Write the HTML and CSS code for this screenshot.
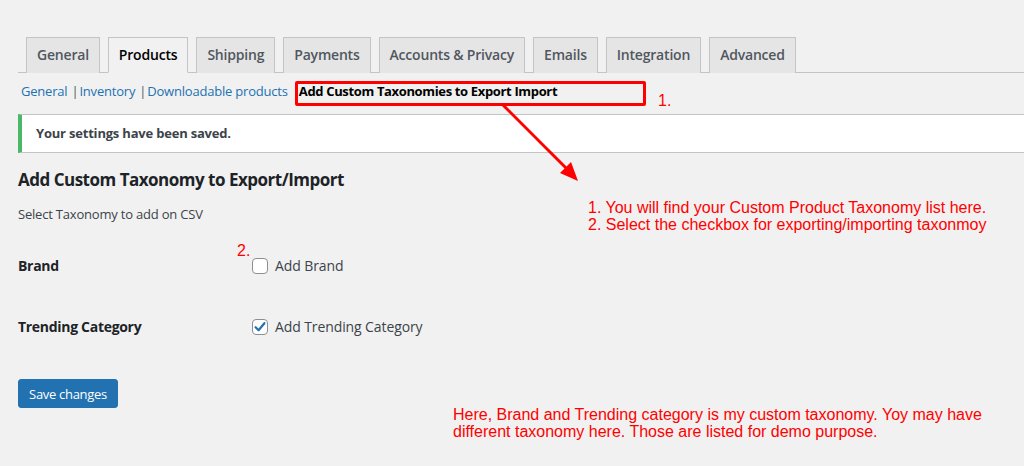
FILE: index.html
```html
<!DOCTYPE html>
<html>
<head>
<meta charset="utf-8">
<link rel="stylesheet" href="styles.css">
</head>
<body>
<div class="wrap">
  <nav class="tabs">
    <a class="tab">General</a>
    <a class="tab active">Products</a>
    <a class="tab">Shipping</a>
    <a class="tab">Payments</a>
    <a class="tab">Accounts &amp; Privacy</a>
    <a class="tab">Emails</a>
    <a class="tab">Integration</a>
    <a class="tab">Advanced</a>
  </nav>
  <ul class="subnav">
    <li><a>General</a></li>
    <li class="sep">|</li>
    <li><a>Inventory</a></li>
    <li class="sep">|</li>
    <li><a>Downloadable products</a></li>
    <li class="current">Add Custom Taxonomies to Export Import</li>
  </ul>
  <div class="notice"><p>Your settings have been saved.</p></div>
  <h2 class="title">Add Custom Taxonomy to Export/Import</h2>
  <p class="desc">Select Taxonomy to add on CSV</p>
  <div class="form">
    <div class="row">
      <div class="label">Brand</div>
      <label class="field"><span class="cb"></span>Add Brand</label>
    </div>
    <div class="row">
      <div class="label">Trending Category</div>
      <label class="field"><span class="cb checked"><svg viewBox="0 0 16 16" width="16" height="16"><path d="M3.6 8.2 L6.6 11.2 L12.4 4.2" fill="none" stroke="#2271b1" stroke-width="2.2" stroke-linecap="round" stroke-linejoin="round"/></svg></span>Add Trending Category</label>
    </div>
  </div>
  <button class="btn">Save changes</button>

  <div class="ann box"></div>
  <div class="ann n1">1.</div>
  <div class="ann n2">2.</div>
  <svg class="ann arrow" width="1024" height="466" viewBox="0 0 1024 466">
    <line x1="502" y1="104" x2="568" y2="170" stroke="#ff0000" stroke-width="3"/>
    <polygon points="578,181 560,173 571,162" fill="#ff0000"/>
  </svg>
  <div class="ann note1">1. You will find your Custom Product Taxonomy list here.<br>2. Select the checkbox for exporting/importing taxonmoy</div>
  <div class="ann note2">Here, Brand and Trending category is my custom taxonomy. Yoy may have<br>different taxonomy here. Those are listed for demo purpose.</div>
</div>
</body>
</html>
```

FILE: styles.css
```css
html, body {
  margin: 0;
  padding: 0;
  background: #f1f1f1;
}
body {
  font-family: "Open Sans", "Noto Sans", sans-serif;
  font-size: 13px;
  color: #3c434a;
  width: 1024px;
  height: 466px;
  overflow: hidden;
}
.wrap {
  position: relative;
  padding: 37px 0 0 18px;
  height: 429px;
}
.tabs {
  display: flex;
  gap: 8px;
  padding-left: 8px;
  border-bottom: 1px solid #c3c4c7;
  height: 35px;
}
.tab {
  box-sizing: border-box;
  height: 36px;
  padding: 0 10px;
  border: 1px solid #c3c4c7;
  border-bottom: none;
  background: #e5e5e5;
  color: #50575e;
  font-size: 14px;
  font-weight: 600;
  line-height: 34px;
  letter-spacing: -0.2px;
  white-space: nowrap;
}
.tab.active {
  background: #f1f1f1;
  color: #000;
  border-bottom: 1px solid #f1f1f1;
}
.subnav {
  list-style: none;
  margin: 8px 0 0 3px;
  padding: 0;
  display: flex;
  align-items: center;
  height: 20px;
  font-size: 13px;
  line-height: 20px;
  letter-spacing: -0.2px;
}
.subnav a { color: #2271b1; }
.subnav .sep { color: #50575e; margin: 0 1px 0 4px; }
.subnav .current {
  color: #000;
  font-weight: 700;
  margin-left: 11px;
  letter-spacing: -0.35px;
}
.notice {
  margin-top: 13px;
  background: #fff;
  border: 1px solid #c3c4c7;
  border-left: 4px solid #4ab866;
  border-right: none;
  height: 37px;
  display: flex;
  align-items: center;
}
.notice p {
  margin: -1px 0 0 14px;
  font-weight: 700;
  letter-spacing: -0.2px;
  color: #3c434a;
}
.title {
  margin: 15px 0 0;
  font-size: 17px;
  line-height: 24px;
  font-weight: 700;
  color: #1d2327;
  letter-spacing: -0.5px;
}
.desc {
  margin: 12px 0 0;
  line-height: 20px;
  letter-spacing: -0.2px;
}
.form {
  margin-top: 11px;
}
.row {
  display: grid;
  grid-template-columns: 234px 1fr;
  align-items: center;
  height: 61px;
}
.label {
  font-size: 14px;
  font-weight: 700;
  color: #1d2327;
  letter-spacing: -0.3px;
}
.field {
  display: flex;
  align-items: center;
  gap: 7px;
  font-size: 14px;
  letter-spacing: -0.1px;
  color: #3c434a;
}
.cb {
  box-sizing: border-box;
  width: 16px;
  height: 16px;
  border: 1px solid #8c8f94;
  border-radius: 4px;
  background: #fff;
  position: relative;
}
.cb svg { position: absolute; left: -1px; top: -1px; }
.btn {
  margin-top: 22px;
  width: 100px;
  height: 29px;
  background: #2271b1;
  border: 1px solid #2271b1;
  border-radius: 3px;
  color: #fff;
  font-family: "Open Sans", "Noto Sans", sans-serif;
  font-size: 13px;
  letter-spacing: -0.3px;
  padding: 0;
}
.ann {
  position: absolute;
  color: #ff0000;
  font-family: "Liberation Sans", Arial, sans-serif;
  font-size: 16px;
  line-height: 17px;
}
.box {
  left: 295px;
  top: 81px;
  width: 345px;
  height: 19px;
  border: 3px solid #ff0000;
  border-radius: 2px;
}
.n1 { left: 658px; top: 92px; }
.n2 { left: 237px; top: 242px; }
.arrow { left: 0; top: 0; }
.note1 { left: 588px; top: 199px; white-space: nowrap; }
.note2 { left: 453px; top: 406px; white-space: nowrap; }
```
